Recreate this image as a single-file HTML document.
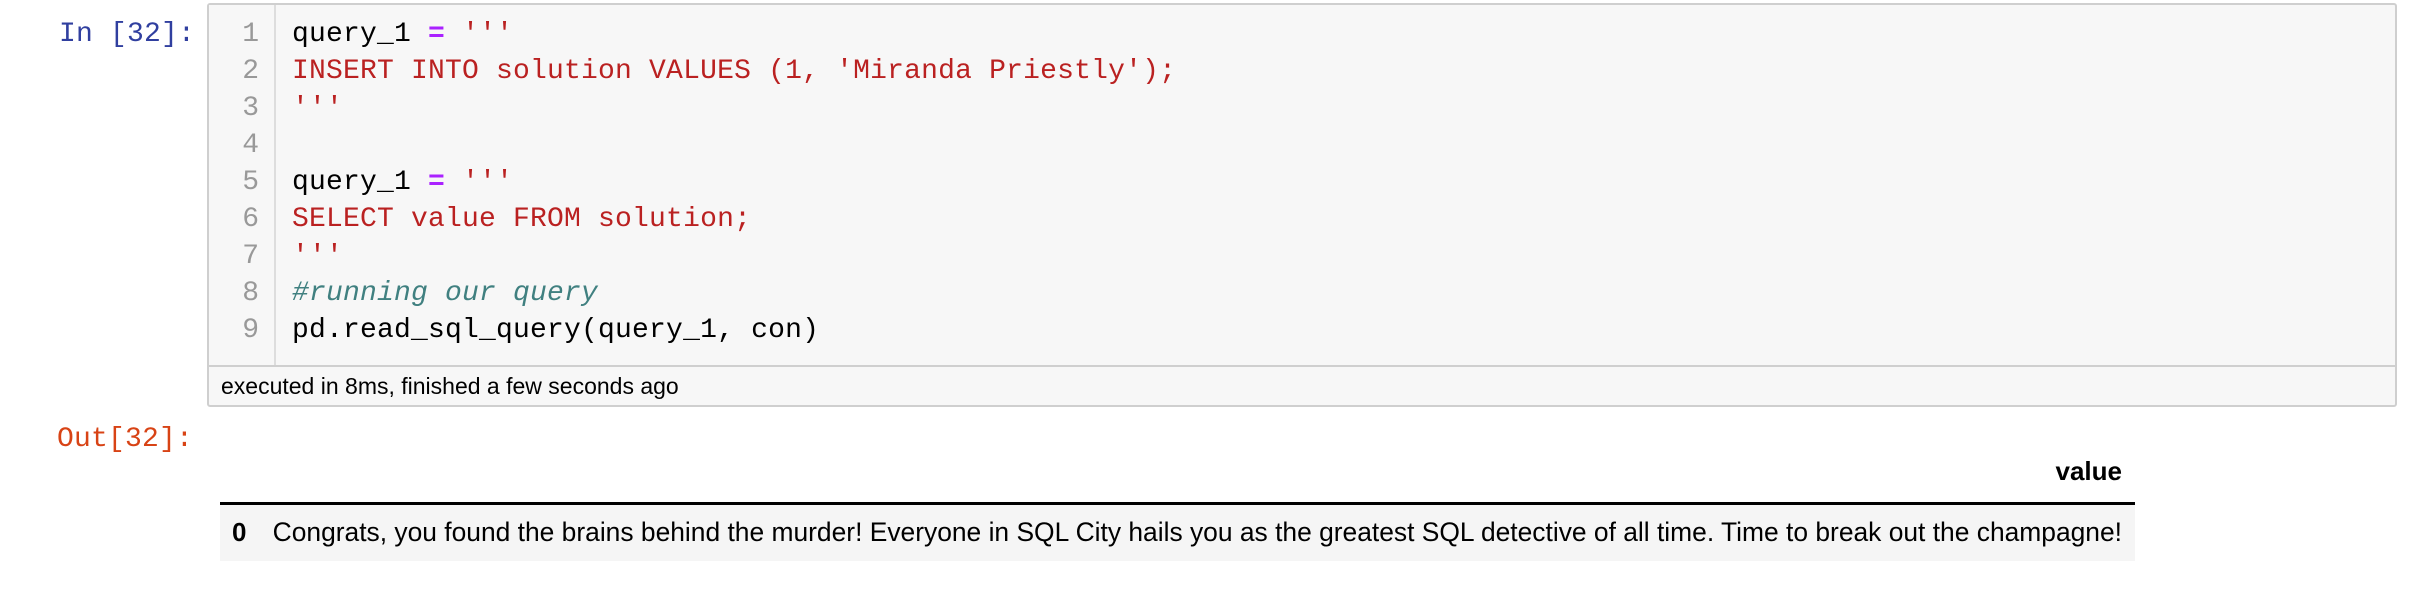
<!DOCTYPE html>
<html><head><meta charset="utf-8"><style>
html,body{margin:0;padding:0;background:#fff;width:2426px;height:594px;overflow:hidden;position:relative}
.mono{font-family:"Liberation Mono","DejaVu Sans Mono",monospace;letter-spacing:0.2px}
.sans{font-family:"Liberation Sans",Arial,sans-serif}
#in{position:absolute;left:59px;top:16px;font-size:28px;color:#303F9F;line-height:37px}
#cell{position:absolute;left:207px;top:3px;width:2186px;height:400px;border:2px solid #cfcfcf;border-radius:3px;background:#f7f7f7}
#gutter{position:absolute;left:0;top:0;width:65px;height:360px;border-right:2px solid #ddd;background:#f7f7f7}
.ln{position:absolute;left:0;width:50px;text-align:right;color:#999;font-size:28px;letter-spacing:0}
.code{position:absolute;left:83px;font-size:28px;color:#000;white-space:pre}
#div{position:absolute;left:0;top:360px;width:100%;height:2px;background:#cfcfcf}
#foot{position:absolute;left:12px;top:368px;font-size:23px;color:#000}
#out{position:absolute;left:57px;top:421px;font-size:28px;color:#D84315;line-height:37px}
#hdr{position:absolute;left:220px;width:1902px;top:456px;text-align:right;font-size:26px;font-weight:bold}
#hl{position:absolute;left:220px;width:1915px;top:502px;height:3px;background:#000}
#row{position:absolute;left:220px;width:1915px;top:505px;height:56px;background:#f5f5f5}
#zero{position:absolute;left:12px;top:12px;font-size:26px;font-weight:bold}
#txt{position:absolute;right:13px;top:12px;font-size:26.4px;white-space:nowrap}
.r{color:#BA2121}.p{color:#AA22FF;font-weight:bold}.c{color:#408080;font-style:italic}
</style></head><body>
<div id="in" class="mono">In [32]:</div>
<div id="cell">
<div id="gutter"></div>
<div class="mono">
<div class="ln" style="top:14px">1</div><div class="ln" style="top:51px">2</div><div class="ln" style="top:88px">3</div><div class="ln" style="top:125px">4</div><div class="ln" style="top:162px">5</div><div class="ln" style="top:199px">6</div><div class="ln" style="top:236px">7</div><div class="ln" style="top:273px">8</div><div class="ln" style="top:310px">9</div>
<div class="code" style="top:14px">query_1 <span class="p">=</span> <span class="r">'''</span></div>
<div class="code r" style="top:51px">INSERT INTO solution VALUES (1, 'Miranda Priestly');</div>
<div class="code r" style="top:88px">'''</div>
<div class="code" style="top:162px">query_1 <span class="p">=</span> <span class="r">'''</span></div>
<div class="code r" style="top:199px">SELECT value FROM solution;</div>
<div class="code r" style="top:236px">'''</div>
<div class="code c" style="top:273px">#running our query</div>
<div class="code" style="top:310px">pd.read_sql_query(query_1, con)</div>
</div>
<div id="div"></div>
<div id="foot" class="sans">executed in 8ms, finished a few seconds ago</div>
</div>
<div id="out" class="mono">Out[32]:</div>
<div id="hdr" class="sans">value</div>
<div id="hl"></div>
<div id="row" class="sans"><div id="zero">0</div><div id="txt">Congrats, you found the brains behind the murder! Everyone in SQL City hails you as the greatest SQL detective of all time. Time to break out the champagne!</div></div>
</body></html>
